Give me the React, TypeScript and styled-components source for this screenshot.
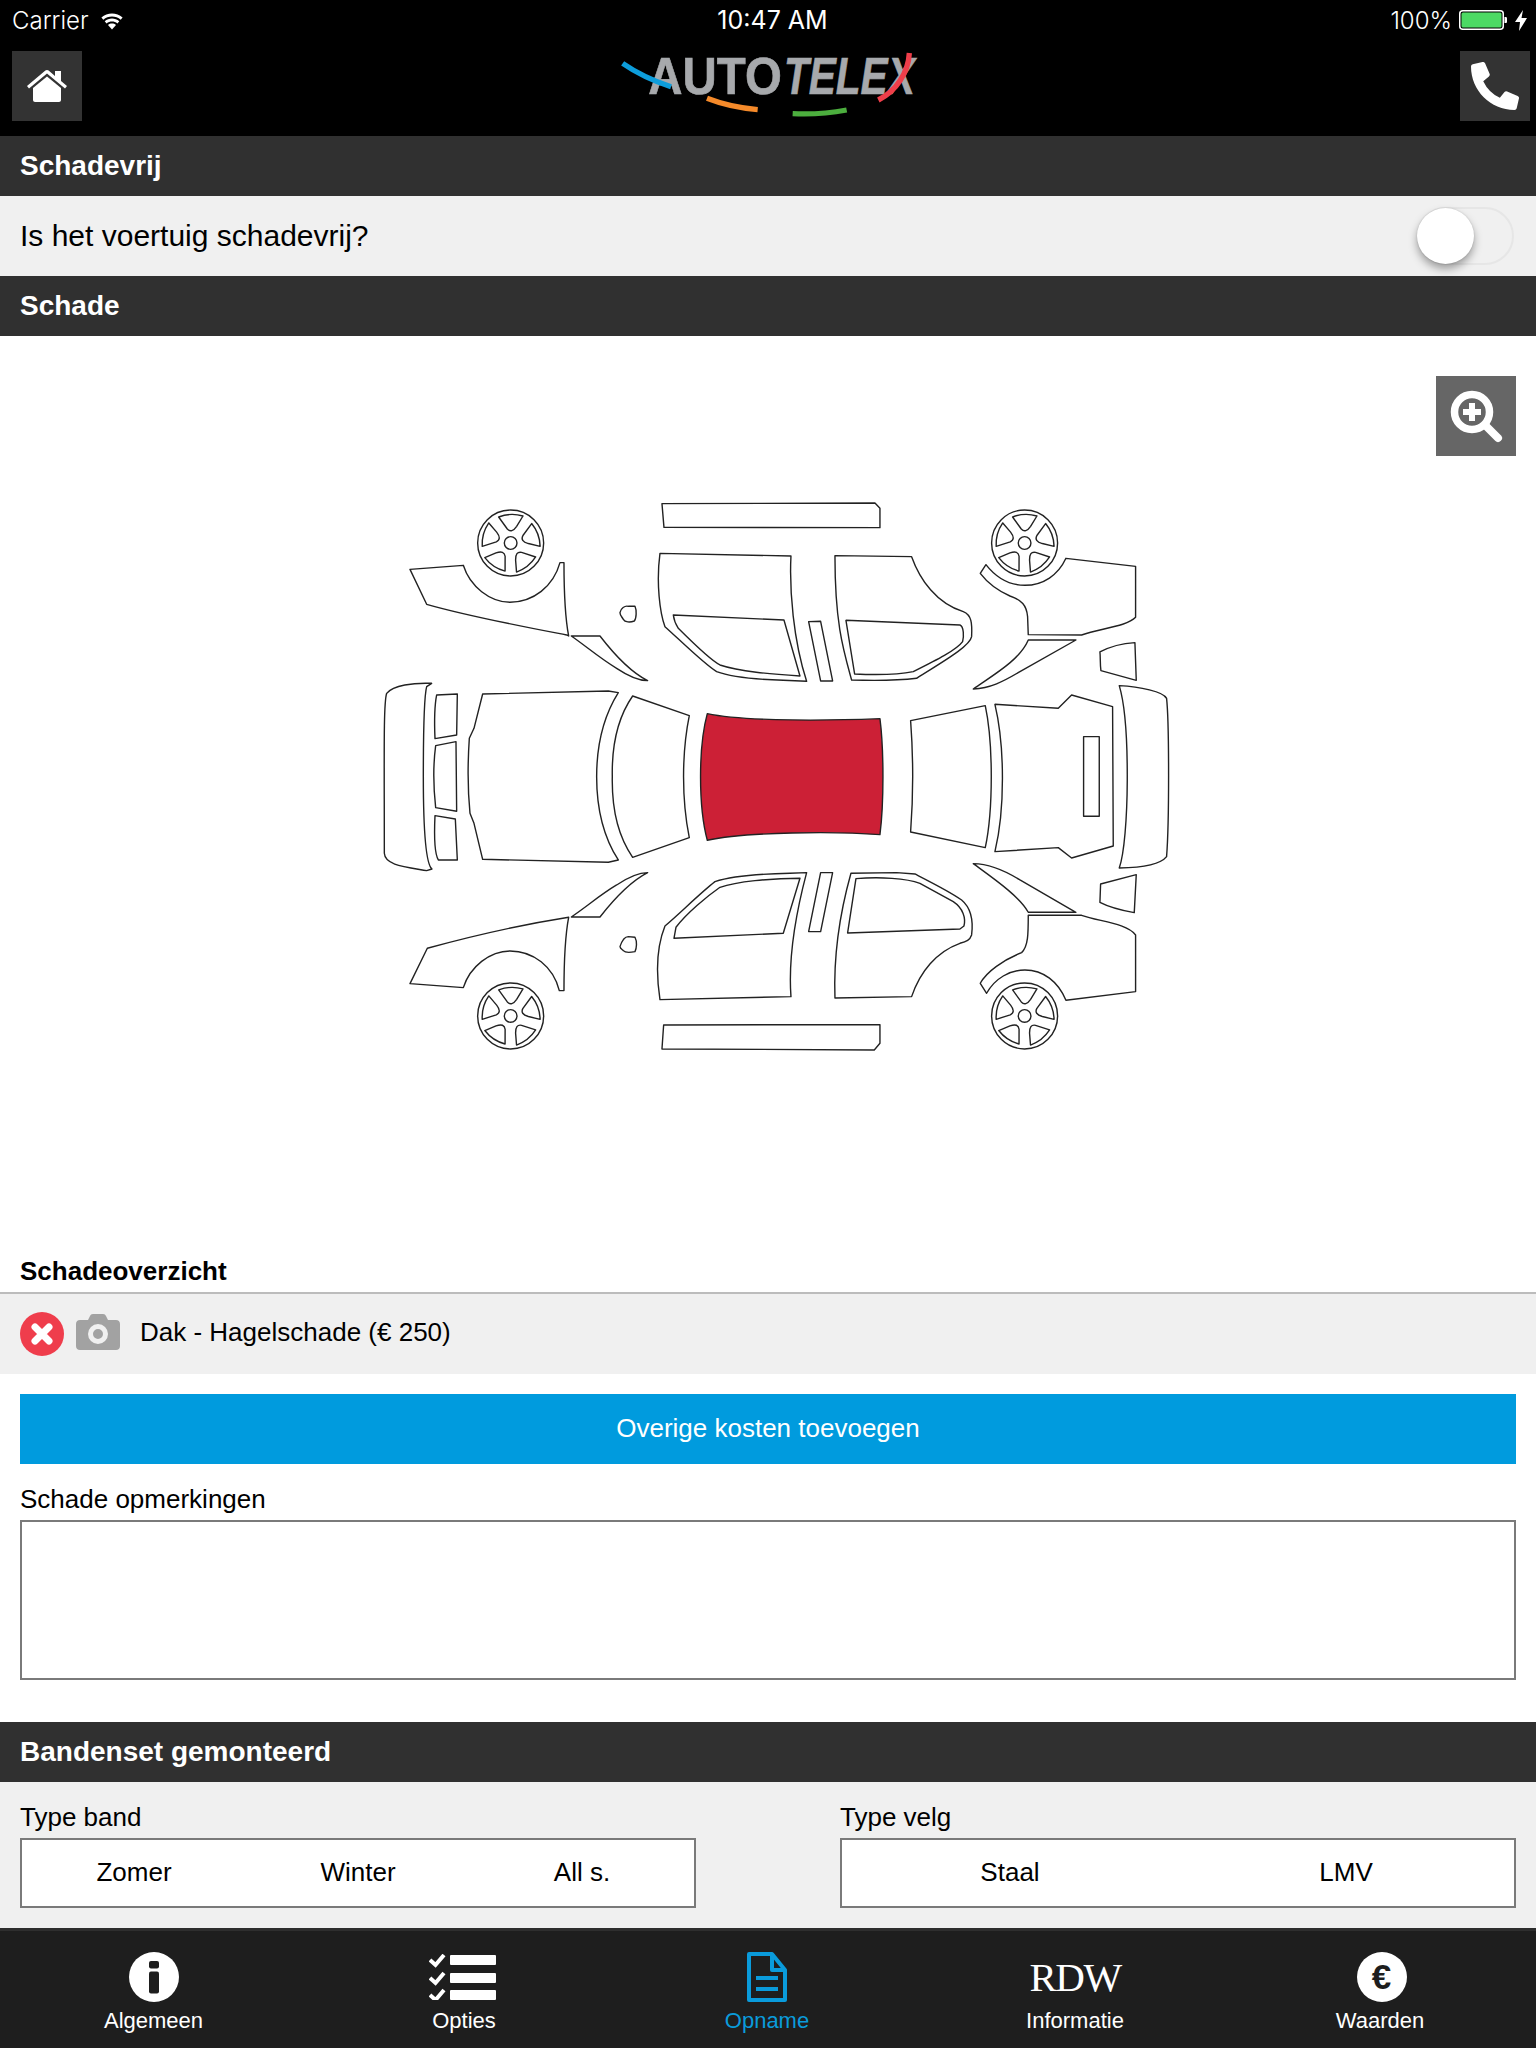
import React from "react";
import styled, { createGlobalStyle } from "styled-components";
import { FaPhoneAlt } from "react-icons/fa";

const Global = createGlobalStyle`
  html, body { margin: 0; padding: 0; background: #fff; }
  * { box-sizing: border-box; }
`;

const Page = styled.div`
  width: 1536px;
  height: 2048px;
  overflow: hidden;
  display: flex;
  flex-direction: column;
  font-family: "Liberation Sans", Arial, sans-serif;
  color: #000;
  background: #fff;
`;

const Top = styled.header`
  height: 136px;
  background: #000;
  color: #fff;
  flex: none;
`;

const StatusBar = styled.div`
  height: 51px;
  padding: 0 9px 11px 12px;
  display: grid;
  grid-template-columns: 1fr auto 1fr;
  align-items: center;
  font-family: Inter, "Liberation Sans", sans-serif;
  font-size: 24px;
  font-weight: 300;
`;

const StatusLeft = styled.div`
  display: flex;
  align-items: center;
  gap: 10px;
`;

const StatusTime = styled.div`
  font-weight: 400;
  font-size: 25px;
  transform: translateX(3px);
`;

const StatusRight = styled.div`
  display: flex;
  align-items: center;
  justify-content: flex-end;
  gap: 7px;
`;

const NavRow = styled.div`
  height: 70px;
  padding: 0 6px 0 12px;
  display: flex;
  justify-content: space-between;
  align-items: center;
`;

const NavButton = styled.div`
  width: 70px;
  height: 70px;
  background: #333;
  display: flex;
  align-items: center;
  justify-content: center;
  color: #fff;
`;

const Logo = styled.svg`
  width: 360px;
  height: 100px;
  margin-left: -22px;
  margin-top: -14px;
  display: block;
`;

const SectionBar = styled.h2`
  margin: 0;
  height: 60px;
  flex: none;
  padding: 0 20px;
  background: #303030;
  color: #fff;
  display: flex;
  align-items: center;
  font-size: 28px;
  line-height: 1;
  font-weight: 700;
`;

const ToggleRow = styled.div`
  height: 80px;
  flex: none;
  background: #f0f0f0;
  padding: 0 22px 0 20px;
  display: flex;
  align-items: center;
  justify-content: space-between;
  font-size: 30px;
`;

const Track = styled.div`
  position: relative;
  width: 97px;
  height: 58px;
  border: 2px solid #e6e6e6;
  border-radius: 29px;
`;

const Knob = styled.div`
  position: absolute;
  left: -2px;
  top: -1px;
  width: 57px;
  height: 56px;
  border-radius: 50%;
  background: #fff;
  box-shadow: 0 5px 8px rgba(0, 0, 0, 0.35), 0 0 2px rgba(0, 0, 0, 0.15);
`;

const DiagramArea = styled.section`
  position: relative;
  height: 916px;
  flex: none;
  padding: 154px 0 0 370px;
`;

const Diagram = styled.svg`
  display: block;
  width: 830px;
  height: 580px;
`;

const ZoomButton = styled.div`
  position: absolute;
  top: 40px;
  right: 20px;
  width: 80px;
  height: 80px;
  background: #666;
  display: flex;
  align-items: center;
  justify-content: center;
`;

const OverviewTitle = styled.h3`
  margin: 0;
  height: 42px;
  flex: none;
  padding: 0 20px 2px;
  display: flex;
  align-items: center;
  font-size: 26px;
  font-weight: 700;
  border-bottom: 2px solid #bcbcbc;
`;

const DamageRow = styled.div`
  height: 80px;
  flex: none;
  background: #f0f0f0;
  padding: 0 20px;
  display: flex;
  align-items: center;
  gap: 12px;
  font-size: 26px;
`;

const RowIcon = styled.svg`
  width: 44px;
  height: 44px;
  display: block;
  flex: none;
`;

const DamageText = styled.span`
  margin-left: 8px;
  padding-bottom: 4px;
`;

const PrimaryButton = styled.div`
  height: 70px;
  margin: 20px 20px 0;
  flex: none;
  background: #009bde;
  color: #fff;
  display: flex;
  align-items: center;
  justify-content: center;
  padding-bottom: 2px;
  font-size: 26px;
`;

const FieldLabel = styled.div`
  height: 56px;
  flex: none;
  padding: 0 20px 5px;
  display: flex;
  align-items: flex-end;
  font-size: 26px;
`;

const TextBox = styled.div`
  height: 160px;
  flex: none;
  margin: 0 20px;
  border: 2px solid #7a7a7a;
  background: #fff;
`;

const Spacer = styled.div`
  height: 42px;
  flex: none;
`;

const TyreArea = styled.div`
  height: 146px;
  flex: none;
  background: #f0f0f0;
  padding: 0 20px;
  display: grid;
  grid-template-columns: 676px 676px;
  justify-content: space-between;
`;

const TyreField = styled.div`
  display: flex;
  flex-direction: column;
`;

const TyreLabel = styled.div`
  height: 56px;
  padding-bottom: 5px;
  display: flex;
  align-items: flex-end;
  font-size: 26px;
`;

const Segments = styled.div<{ $count: number }>`
  height: 70px;
  border: 2px solid #7a7a7a;
  background: #fff;
  padding-bottom: 2px;
  display: grid;
  grid-template-columns: repeat(${(p) => p.$count}, 1fr);
  align-items: center;
  text-align: center;
  font-size: 26px;
`;

const TabBar = styled.nav`
  height: 120px;
  flex: none;
  background: #1e1e1e;
  border-top: 3px solid #2e2e2e;
  display: grid;
  grid-template-columns: 307px 314px 292px 324px 286px;
`;

const Tab = styled.div<{ $active?: boolean }>`
  display: flex;
  flex-direction: column;
  align-items: center;
  padding-top: 21px;
  color: ${(p) => (p.$active ? "#0a9bdb" : "#fff")};
  font-size: 22px;
`;

const TabIcon = styled.div`
  height: 50px;
  display: flex;
  align-items: center;
  justify-content: center;
`;

const TabLabel = styled.div`
  margin-top: 6px;
  line-height: 26px;
`;

const RdwMark = styled.div`
  font-family: "Liberation Serif", "Times New Roman", serif;
  font-size: 41px;
  line-height: 50px;
  letter-spacing: -1.5px;
`;

const EuroBadge = styled.div`
  width: 50px;
  height: 50px;
  margin-left: 3px;
  border-radius: 50%;
  background: #fff;
  color: #1e1e1e;
  display: flex;
  align-items: center;
  justify-content: center;
  font-size: 35px;
  font-weight: 700;
`;

const ListIcon = styled.svg`
  margin-left: -4px;
`;

const Wheel = ({ cx, cy }: { cx: number; cy: number }) => (
  <g transform={`translate(${cx} ${cy})`}>
    <circle r={99} />
    <circle r={19} />
    {[0, 72, 144, 216, 288].map((a) => (
      <path
        key={a}
        transform={`rotate(${a})`}
        d="M-36 -78 Q0 -92 37 -81 L18 -50 Q3 -28 -10 -42 Z"
      />
    ))}
  </g>
);

const CarDiagram = () => (
  <Diagram viewBox="370 490 830 580">
    <g
      transform="translate(370 490) scale(0.3333)"
      fill="#fff"
      stroke="#222"
      strokeWidth={4.2}
      strokeLinejoin="round"
    >
      {/* top side */}
      <Wheel cx={422} cy={159} />
      <path d="M120 238 L280 226 C300 290 360 336 420 337 C490 336 550 290 570 218 L582 218 C582 300 585 380 596 438 L590 435 C450 408 300 380 170 343 Z" />
      <path d="M604 438 L690 438 C730 490 780 545 833 572 C800 572 770 555 740 535 C690 505 650 470 604 438 Z" />
      <path d="M750 368 C752 355 765 346 775 349 L795 349 C800 360 800 385 793 393 C780 398 765 397 760 388 C755 380 750 375 750 368 Z" />
      <path d="M876 41 L1515 39 L1530 55 L1530 113 L882 112 Z" />
      <path d="M870 190 L1263 198 C1258 300 1270 450 1310 574 L1240 571 C1150 568 1080 560 1040 545 C1000 520 930 450 885 410 C870 370 858 280 870 190 Z" />
      <path d="M910 375 L1242 390 L1290 558 C1200 552 1110 545 1050 525 C1020 510 960 450 925 415 C915 400 912 390 910 375 Z" />

      {/* front, roof */}
      <path d="M185 580 C130 578 70 585 50 610 C40 640 43 800 43 1090 C45 1125 100 1130 170 1142 L186 1137 C165 1120 160 1000 160 860 C160 720 162 620 170 590 Z" />
      <path d="M200 615 L262 612 L260 735 L195 746 C193 700 193 650 200 615 Z" />
      <path d="M197 767 L258 755 L260 964 L197 953 C190 890 190 820 197 767 Z" />
      <path d="M195 977 L256 987 L262 1110 L205 1110 C193 1090 193 1020 195 977 Z" />
      <path d="M338 612 L715 603 L745 608 C700 680 680 760 680 860 C680 960 700 1040 745 1110 L715 1117 L338 1108 L312 1000 L300 970 C293 900 293 820 298 745 L312 715 Z" />
      <path d="M788 618 L958 677 C935 790 935 930 958 1043 L788 1102 C745 1040 725 960 727 860 C725 760 745 680 788 618 Z" />
      <path
        fill="#cc2036"
        d="M1012 671 C1100 690 1300 695 1530 686 C1542 780 1542 940 1530 1034 C1400 1024 1130 1025 1012 1051 C985 950 985 770 1012 671 Z"
      />

      {/* top right and rear */}
      <g transform="translate(1230 0)">
        <Wheel cx={734} cy={159} />
        <path d="M86 395 L122 394 L158 573 L122 573 Z" />
        <path d="M165 197 L395 200 C420 270 470 340 550 365 C575 375 577 400 575 440 C570 470 480 520 410 565 C350 572 280 572 215 570 C190 480 165 400 165 197 Z" />
        <path d="M198 391 L540 405 C552 410 552 440 548 455 C530 480 470 510 400 545 C350 555 290 555 224 552 Z" />
        <path d="M858 205 L1067 229 L1067 382 C1040 410 960 415 905 435 L745 434 L743 380 C740 345 725 330 690 318 C650 300 620 275 601 250 L618 224 C650 265 690 286 735 286 C790 286 835 255 858 205 Z" />
        <path d="M745 450 L888 450 L720 545 C670 575 630 595 580 597 C640 555 720 510 745 450 Z" />
        <path d="M960 486 C990 470 1030 460 1065 458 L1069 571 L963 542 C960 520 962 505 960 486 Z" />
        <path d="M392 692 L616 647 C640 760 640 960 616 1073 L392 1026 C400 920 400 800 392 692 Z" />
        <path d="M645 643 L835 655 L875 615 L998 650 L1000 1068 L875 1104 L835 1073 L645 1085 C675 960 675 770 645 643 Z" />
        <rect x={911} y={740} width={47} height={239} />
        <path d="M1018 587 C1080 590 1150 605 1160 625 C1168 700 1168 1000 1160 1100 C1140 1125 1080 1133 1018 1134 C1048 1050 1052 700 1018 587 Z" />
      </g>

      {/* bottom left */}
      <g transform="translate(0 1080)">
        <Wheel cx={422} cy={498} />
        <path d="M120 401 L280 413 C300 350 360 303 420 303 C490 303 550 350 568 422 L582 422 C582 340 585 260 596 202 C450 225 300 260 172 295 Z" />
        <path d="M604 201 L690 201 C730 150 780 95 833 68 C800 68 770 85 740 105 C690 135 650 170 604 201 Z" />
        <path d="M750 290 C755 275 765 260 775 260 L795 262 C802 275 800 295 795 305 C780 308 765 308 760 302 C755 298 750 295 750 290 Z" />
        <path d="M881 525 L1530 524 L1530 580 L1513 600 L876 597 Z" />
        <path d="M870 449 L1263 440 C1255 330 1275 200 1310 68 L1260 70 C1150 72 1080 80 1035 95 C990 130 930 190 885 228 C860 290 858 370 870 449 Z" />
        <path d="M912 265 L1240 250 L1290 85 C1200 85 1100 95 1050 112 C1010 140 950 190 918 232 Z" />
      </g>

      {/* bottom right */}
      <g transform="translate(1230 1080)">
        <Wheel cx={734} cy={498} />
        <path d="M122 68 L158 68 L122 245 L86 245 Z" />
        <path d="M213 70 L350 68 L405 72 C450 95 510 125 545 150 C575 175 580 215 575 255 C570 270 560 275 540 280 C470 305 420 365 395 440 L165 444 C160 300 185 170 213 70 Z" />
        <path d="M228 86 C300 80 380 85 420 100 L520 155 C550 175 558 205 552 228 L540 237 L203 249 Z" />
        <path d="M745 196 L905 196 C960 215 1040 220 1067 255 L1067 425 L858 451 C835 395 790 360 735 360 C690 360 645 385 620 430 L601 400 C620 365 670 330 725 308 C745 290 745 250 745 196 Z" />
        <path d="M745 187 L888 187 L720 90 C680 65 630 42 580 41 C640 85 720 140 745 187 Z" />
        <path d="M962 102 L1069 74 L1063 188 C1020 180 985 170 960 157 Z" />
      </g>
    </g>
  </Diagram>
);

const AutotelexLogo = () => (
  <Logo viewBox="0 0 1080 300">
    <g fill="#a7a9ac" stroke="#a7a9ac" strokeWidth={2} fontFamily='"Liberation Sans", Arial, sans-serif' fontWeight={700} fontSize={158}>
      <text transform="translate(205 196) scale(.9 1)">AUTO</text>
      <text transform="translate(612 196) scale(.77 1)" fontStyle="italic">TELEX</text>
    </g>
    <g fill="none" strokeWidth={16}>
      <path stroke="#0d9ddb" d="M128 103 Q190 146 273 173" />
      <path stroke="#f58a2a" d="M381 208 Q450 235 533 242" />
      <path stroke="#4cae3e" d="M638 254 Q720 258 800 243" />
      <path stroke="#ef3e4a" d="M988 72 C985 130 950 185 895 213" />
    </g>
  </Logo>
);

export default function App() {
  return (
    <Page>
      <Global />
      <Top>
        <StatusBar>
          <StatusLeft>
            <span>Carrier</span>
            <svg width="26" height="19" viewBox="0 0 26 18" fill="#fff">
              <path d="M13 18 L9 13.5 C11.3 11.6 14.7 11.6 17 13.5 Z" />
              <path d="M7.6 11.9 L5.7 9.8 C9.8 6.2 16.2 6.2 20.3 9.8 L18.4 11.9 C15.3 9.3 10.7 9.3 7.6 11.9 Z" />
              <path d="M4.3 8.2 L2.4 6.1 C8.4 .6 17.6 .6 23.6 6.1 L21.7 8.2 C16.8 3.9 9.2 3.9 4.3 8.2 Z" />
            </svg>
          </StatusLeft>
          <StatusTime>10:47 AM</StatusTime>
          <StatusRight>
            <span>100%</span>
            <svg width="49" height="20" viewBox="0 0 49 20">
              <rect x=".75" y=".75" width="43.5" height="18.5" rx="3" fill="none" stroke="#fff" strokeWidth="1.5" />
              <rect x="2.5" y="2.5" width="40" height="15" rx="1.5" fill="#4cd964" />
              <path d="M45.5 7 H46.5 C47.5 7 48 7.5 48 8.5 V11.5 C48 12.5 47.5 13 46.5 13 H45.5 Z" fill="#fff" />
            </svg>
            <svg width="12" height="21" viewBox="0 0 12 21" fill="#fff">
              <path d="M8 0 L0 12 H5 L4 21 L12 8 H6.5 Z" />
            </svg>
          </StatusRight>
        </StatusBar>
        <NavRow>
          <NavButton>
            <svg width="40" height="32" viewBox="0 0 40 32" fill="#fff">
              <path d="M20 6.4 L6 18 V30 C6 31 7 32 8 32 H32 C33 32 34 31 34 30 V18 Z" />
              <path d="M20 0 C19.4 0 18.8.2 18.4.6 L0 16 L2 18.6 L20 3.6 L38 18.6 L40 16 L34 11 V1 H28 V6 L21.6.6 C21.2.2 20.6 0 20 0 Z" />
            </svg>
          </NavButton>
          <AutotelexLogo />
          <NavButton>
            <FaPhoneAlt size={48} />
          </NavButton>
        </NavRow>
      </Top>

      <SectionBar>Schadevrij</SectionBar>
      <ToggleRow>
        <span>Is het voertuig schadevrij?</span>
        <Track>
          <Knob />
        </Track>
      </ToggleRow>
      <SectionBar>Schade</SectionBar>

      <DiagramArea>
        <CarDiagram />
        <ZoomButton>
          <svg width="80" height="80" viewBox="0 0 80 80" fill="none" stroke="#fff">
            <circle cx="36" cy="36" r="17.5" strokeWidth="7.5" />
            <path d="M50 50 L62 62" strokeWidth="8" strokeLinecap="round" />
            <path d="M36 27 V45 M27 36 H45" strokeWidth="6" />
          </svg>
        </ZoomButton>
      </DiagramArea>

      <OverviewTitle>Schadeoverzicht</OverviewTitle>
      <DamageRow>
        <RowIcon viewBox="0 0 44 44">
          <circle cx="22" cy="22" r="22" fill="#ef3d4c" />
          <path d="M15 15 L29 29 M29 15 L15 29" stroke="#fff" strokeWidth="7" strokeLinecap="round" />
        </RowIcon>
        <RowIcon viewBox="0 0 44 44">
          <path
            fill="#a2a2a2"
            d="M4 8 H12 L14 4 C14.6 2.8 15.4 2 17 2 H27 C28.6 2 29.4 2.8 30 4 L32 8 H40 C42.4 8 44 9.6 44 12 V34 C44 36.4 42.4 38 40 38 H4 C1.6 38 0 36.4 0 34 V12 C0 9.6 1.6 8 4 8 Z"
          />
          <circle cx="22" cy="22" r="7.5" fill="#a2a2a2" stroke="#f0f0f0" strokeWidth="5" />
        </RowIcon>
        <DamageText>Dak - Hagelschade (€ 250)</DamageText>
      </DamageRow>

      <PrimaryButton>Overige kosten toevoegen</PrimaryButton>
      <FieldLabel>Schade opmerkingen</FieldLabel>
      <TextBox />
      <Spacer />

      <SectionBar>Bandenset gemonteerd</SectionBar>
      <TyreArea>
        <TyreField>
          <TyreLabel>Type band</TyreLabel>
          <Segments $count={3}>
            <span>Zomer</span>
            <span>Winter</span>
            <span>All s.</span>
          </Segments>
        </TyreField>
        <TyreField>
          <TyreLabel>Type velg</TyreLabel>
          <Segments $count={2}>
            <span>Staal</span>
            <span>LMV</span>
          </Segments>
        </TyreField>
      </TyreArea>

      <TabBar>
        <Tab>
          <TabIcon>
            <svg width="50" height="50" viewBox="0 0 50 50">
              <circle cx="25" cy="25" r="25" fill="#fff" />
              <rect x="20" y="9" width="10" height="7.5" rx="2" fill="#1e1e1e" />
              <rect x="20" y="19.5" width="10" height="22" rx="2" fill="#1e1e1e" />
            </svg>
          </TabIcon>
          <TabLabel>Algemeen</TabLabel>
        </Tab>
        <Tab>
          <TabIcon>
            <ListIcon width="67" height="46" viewBox="0 0 67 46" fill="#fff">
              {[0, 18, 35].map((y) => (
                <g key={y} transform={`translate(0 ${y})`}>
                  <rect x="21" y="1" width="46" height="10" rx="1" />
                  <path d="M1 6 L6.5 11 L15 1" fill="none" stroke="#fff" strokeWidth="4" />
                </g>
              ))}
            </ListIcon>
          </TabIcon>
          <TabLabel>Opties</TabLabel>
        </Tab>
        <Tab $active>
          <TabIcon>
            <svg width="40" height="50" viewBox="0 0 40 50" fill="none" stroke="#0a9bdb" strokeWidth="4" strokeLinejoin="round">
              <path d="M2 2 H25 L38 18 V48 H2 Z" />
              <path d="M25 2 V18 H38" />
              <path d="M9 26 H31 M9 37 H31" />
            </svg>
          </TabIcon>
          <TabLabel>Opname</TabLabel>
        </Tab>
        <Tab>
          <RdwMark>RDW</RdwMark>
          <TabLabel>Informatie</TabLabel>
        </Tab>
        <Tab>
          <TabIcon>
            <EuroBadge>€</EuroBadge>
          </TabIcon>
          <TabLabel>Waarden</TabLabel>
        </Tab>
      </TabBar>
    </Page>
  );
}
